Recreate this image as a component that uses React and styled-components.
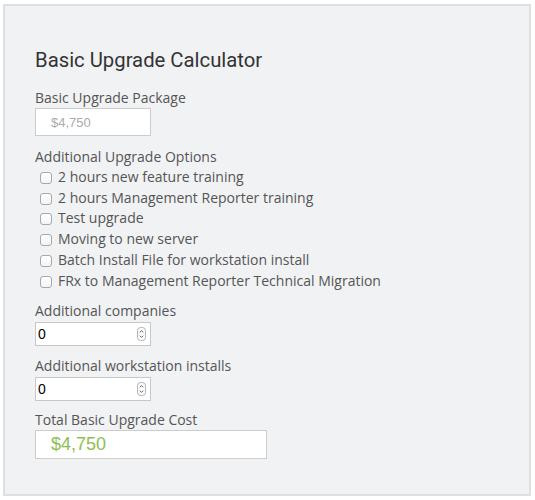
import React from "react";
import styled, { createGlobalStyle } from "styled-components";

const GlobalStyle = createGlobalStyle`
  html, body { margin: 0; padding: 0; background: #ffffff; }
  * { box-sizing: border-box; }
`;

const Page = styled.div`
  padding: 4px 0 0 3px;
`;

const Panel = styled.section`
  width: 528px;
  height: 492px;
  border: 2px solid #dedfe0;
  background: #f1f2f4;
  padding: 42px 30px 0;
  display: flex;
  flex-direction: column;
`;

const Title = styled.h2`
  margin: 0;
  font-family: Roboto, "Liberation Sans", sans-serif;
  font-weight: 400;
  font-size: 20.3px;
  line-height: 24px;
  color: #333333;
`;

const Field = styled.div`
  margin-top: ${(p) => p.$top}px;
  display: flex;
  flex-direction: column;
  align-items: flex-start;
`;

const Label = styled.label`
  display: block;
  font-family: "Open Sans", "Liberation Sans", sans-serif;
  font-size: 14px;
  line-height: 20px;
  color: #555555;
`;

const AmountInput = styled.input`
  display: block;
  width: ${(p) => p.$w}px;
  height: ${(p) => p.$h}px;
  margin: 0;
  border: 1px solid #cccccc;
  background: #ffffff;
  padding: 0 0 0 15px;
  font-family: "Liberation Sans", Arial, sans-serif;
  font-size: ${(p) => p.$size}px;
  color: ${(p) => p.$color};
  outline: none;
  border-radius: 0;
`;

const OptionList = styled.div`
  display: flex;
  flex-direction: column;
  margin-top: -1px;
`;

const OptionRow = styled.label`
  display: flex;
  align-items: center;
  height: 20.8px;
  padding-left: 5px;
  gap: 6px;
  font-family: "Open Sans", "Liberation Sans", sans-serif;
  font-size: 14px;
  color: #555555;
`;

const Check = styled.input`
  appearance: none;
  -webkit-appearance: none;
  width: 12px;
  height: 12px;
  margin: 3px 0 0 0;
  border: 1px solid #a8a8a8;
  border-radius: 3px;
  background: linear-gradient(#ffffff, #f4f4f4);
  flex: none;
`;

const NumberBox = styled.div`
  width: 116px;
  height: 24px;
  margin-top: 1px;
  border: 1px solid #c8c8c8;
  background: #ffffff;
  display: flex;
  align-items: center;
  padding: 0 4px 0 2px;
`;

const NumberField = styled.input`
  flex: 1;
  min-width: 0;
  border: none;
  outline: none;
  background: transparent;
  padding: 0;
  margin: 0;
  font-family: "Liberation Sans", Arial, sans-serif;
  font-size: 14px;
  color: #000000;
`;

const Spinner = () => (
  <svg width="9" height="14" viewBox="0 0 9 14">
    <rect x="0.5" y="0.5" width="8" height="13" rx="3" fill="#fafafa" stroke="#b5b5b5" />
    <path d="M2.8 5.3 L4.5 3.6 L6.2 5.3" fill="none" stroke="#555" strokeWidth="0.9" />
    <path d="M2.8 8.7 L4.5 10.4 L6.2 8.7" fill="none" stroke="#555" strokeWidth="0.9" />
  </svg>
);

const options = [
  "2 hours new feature training",
  "2 hours Management Reporter training",
  "Test upgrade",
  "Moving to new server",
  "Batch Install File for workstation install",
  "FRx to Management Reporter Technical Migration",
];

function NumberInput() {
  return (
    <NumberBox>
      <NumberField type="text" defaultValue="0" />
      <Spinner />
    </NumberBox>
  );
}

export default function App() {
  return (
    <>
      <GlobalStyle />
      <Page>
        <Panel>
          <Title>Basic Upgrade Calculator</Title>
          <Field $top={16}>
            <Label>Basic Upgrade Package</Label>
            <AmountInput readOnly value="$4,750" $w={116} $h={28} $size={13} $color="#aaaaaa" />
          </Field>
          <Field $top={11}>
            <Label>Additional Upgrade Options</Label>
            <OptionList>
              {options.map((o) => (
                <OptionRow key={o}>
                  <Check type="checkbox" />
                  {o}
                </OptionRow>
              ))}
            </OptionList>
          </Field>
          <Field $top={10}>
            <Label>Additional companies</Label>
            <NumberInput />
          </Field>
          <Field $top={10}>
            <Label>Additional workstation installs</Label>
            <NumberInput />
          </Field>
          <Field $top={9}>
            <Label>Total Basic Upgrade Cost</Label>
            <AmountInput readOnly value="$4,750" $w={232} $h={29} $size={18} $color="#8cc152" />
          </Field>
        </Panel>
      </Page>
    </>
  );
}
